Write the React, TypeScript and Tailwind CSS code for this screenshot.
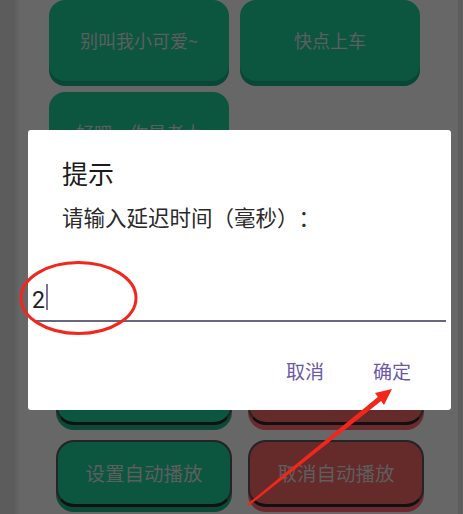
import React from "react"

const topButtons = ["别叫我小可爱~", "快点上车", "好吧，你是老大"]

function GreenPill({ label }: { label: string }) {
  return (
    <div className="h-[81px] rounded-[16px] bg-[#0c5640] shadow-[0_5px_0_#0a4635] flex items-center justify-center text-[18px] text-[#5e5e5e]">
      {label}
    </div>
  )
}

function BorderPill({ label, red }: { label: string; red?: boolean }) {
  return (
    <div
      className={
        red
          ? "h-[67px] rounded-[18px] border-2 border-[#242424] border-b-[3px] border-b-[#111] bg-[#652b2b] shadow-[0_5px_0_#6c2a2f] flex items-center justify-center text-[19.5px] text-[#5e5e5e]"
          : "h-[67px] rounded-[18px] border-2 border-[#242424] border-b-[3px] border-b-[#111] bg-[#0c5640] shadow-[0_5px_0_#0b4a37] flex items-center justify-center text-[19.5px] text-[#5e5e5e]"
      }
    >
      {label}
    </div>
  )
}

export default function App() {
  return (
    <div className="relative w-[463px] h-[514px] overflow-hidden bg-[#676767] flex font-['Noto_Sans_CJK_SC','Noto_Sans',sans-serif] [text-spacing-trim:space-all]">
      <div className="w-[14px] bg-[#5c5c5c]" />
      <div className="w-[6px] bg-gradient-to-r from-[#5c5c5c] to-[#676767]" />

      {/* page behind the dialog */}
      <div className="flex-1 flex flex-col">
        <div className="grid grid-cols-[180px_180px] gap-x-[11px] gap-y-[11px] pl-[29px]">
          {topButtons.map((t) => (
            <GreenPill key={t} label={t} />
          ))}
        </div>
        <div className="grid grid-cols-[176px_176px] gap-x-[16px] gap-y-[15px] pl-[36px] mt-[185px]">
          <BorderPill label="" />
          <BorderPill label="" red />
          <BorderPill label="设置自动播放" />
          <BorderPill label="取消自动播放" red />
        </div>
      </div>

      <div className="w-[5px] bg-[#5c5c5c]" />

      {/* dialog */}
      <div className="absolute left-[28px] top-[130px] w-[423px] h-[280px] bg-white rounded-[3px] flex flex-col">
        <div className="pl-[34px] pt-[30px] text-[26px] leading-none text-[#1c1c1c]">提示</div>
        <div className="pl-[34px] mt-[20px] text-[21.5px] leading-none text-[#2a2a2a]">请输入延迟时间（毫秒）：</div>
        <div className="mt-[56px] ml-[4px] h-[26px] flex items-end">
          <span className="font-['Roboto',sans-serif] text-[23px] leading-none text-[#222] mb-[-2px]">2</span>
          <span className="ml-[1px] w-[2px] h-[26px] bg-[#7b7394]" />
        </div>
        <div className="mt-[10px] ml-[7px] mr-[5px] h-[2px] bg-[#6b6680]" />
        <div className="mt-[39px] pr-[40px] flex justify-end gap-[49px] text-[19px] leading-none text-[#6a58a8]">
          <span>取消</span>
          <span>确定</span>
        </div>
      </div>

      {/* red annotations */}
      <svg className="absolute left-0 top-0 pointer-events-none" width="463" height="514" viewBox="0 0 463 514">
        <ellipse cx="78.5" cy="298" rx="57.5" ry="35.5" fill="none" stroke="#f3261b" strokeWidth="3" />
        <polygon
          points="247,504.5 377.9,397 375,393 392,389 384,405 381.1,401 248.5,506"
          fill="#f3261b"
        />
      </svg>
    </div>
  )
}
